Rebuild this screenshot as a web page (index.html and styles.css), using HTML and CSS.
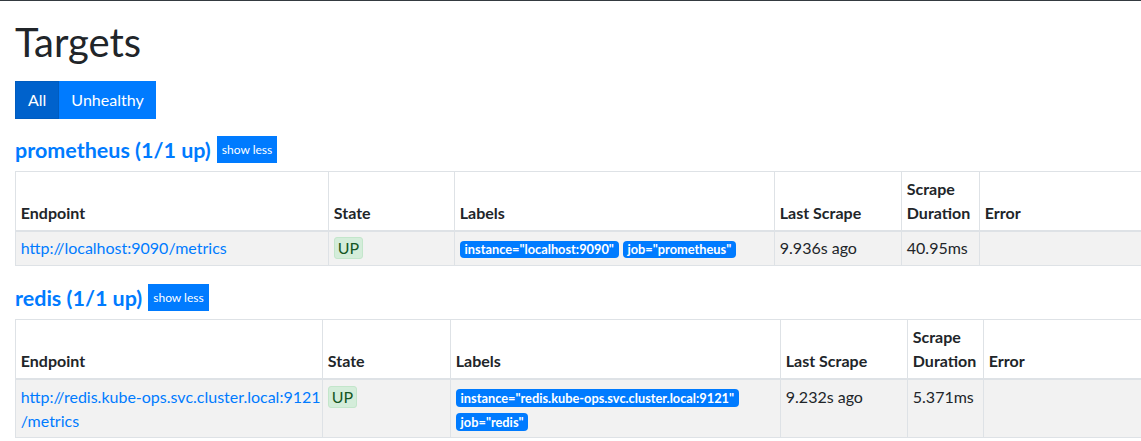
FILE: index.html
```html
<!DOCTYPE html>
<html lang="en">
<head>
<meta charset="utf-8">
<title>Targets</title>
<link rel="stylesheet" href="styles.css">
</head>
<body>
<div class="topbar"></div>
<main class="page">
  <h1 class="title">Targets</h1>
  <div class="filters">
    <button class="btn active">All</button><button class="btn">Unhealthy</button>
  </div>

  <section class="pool">
    <div class="pool-head">
      <a class="pool-name" href="#prometheus">prometheus (1/1 up)</a>
      <button class="toggle">show less</button>
    </div>
    <table class="targets t-prom">
      <colgroup>
        <col class="c-endpoint"><col class="c-state"><col class="c-labels"><col class="c-last"><col class="c-dur"><col class="c-err">
      </colgroup>
      <thead>
        <tr><th>Endpoint</th><th>State</th><th>Labels</th><th>Last Scrape</th><th>Scrape Duration</th><th>Error</th></tr>
      </thead>
      <tbody>
        <tr>
          <td><a class="endpoint" href="#">http://localhost:9090/metrics</a></td>
          <td><span class="state-up">UP</span></td>
          <td><span class="label">instance="localhost:9090"</span><span class="label">job="prometheus"</span></td>
          <td>9.936s ago</td>
          <td>40.95ms</td>
          <td></td>
        </tr>
      </tbody>
    </table>
  </section>

  <section class="pool">
    <div class="pool-head">
      <a class="pool-name" href="#redis">redis (1/1 up)</a>
      <button class="toggle">show less</button>
    </div>
    <table class="targets t-redis">
      <colgroup>
        <col class="c-endpoint"><col class="c-state"><col class="c-labels"><col class="c-last"><col class="c-dur"><col class="c-err">
      </colgroup>
      <thead>
        <tr><th>Endpoint</th><th>State</th><th>Labels</th><th>Last Scrape</th><th>Scrape Duration</th><th>Error</th></tr>
      </thead>
      <tbody>
        <tr>
          <td><a class="endpoint" href="#"><span class="nobr">http://redis.kube-ops.svc.cluster.local:9121</span><wbr><span class="nobr">/metrics</span></a></td>
          <td><span class="state-up">UP</span></td>
          <td><span class="label">instance="redis.kube-ops.svc.cluster.local:9121"</span> <span class="label">job="redis"</span></td>
          <td>9.232s ago</td>
          <td>5.371ms</td>
          <td></td>
        </tr>
      </tbody>
    </table>
  </section>
</main>
</body>
</html>
```
FILE: styles.css
```css
html, body {
  margin: 0;
  padding: 0;
}

body {
  font-family: Lato, "Noto Sans", sans-serif;
  font-size: 16px;
  line-height: 1.5;
  color: #212529;
  background: #fff;
  overflow: hidden;
}

.topbar {
  height: 1px;
  background: #343a40;
}

.page {
  padding: 0 15px;
}

.title {
  font-size: 40px;
  font-weight: 400;
  line-height: 1.2;
  margin: 17px 0 15px;
}

.filters {
  display: flex;
  margin-bottom: 17px;
}

.btn {
  font: inherit;
  line-height: 24px;
  color: #fff;
  background: #007bff;
  border: 1px solid #007bff;
  padding: 6px 12px;
  border-radius: 0;
  cursor: pointer;
}

.btn + .btn {
  padding: 6px 11px;
}

.btn.active {
  background: #0062cc;
  border-color: #005cbf;
}

.pool-head {
  display: flex;
  align-items: center;
  gap: 6px;
  height: 27px;
  margin-bottom: 8px;
}

.pool-name {
  font-size: 21.5px;
  font-weight: 700;
  line-height: 26px;
  color: #007bff;
  text-decoration: none;
}

.toggle {
  font-family: inherit;
  font-size: 12px;
  line-height: 19px;
  padding: 4px 5px;
  color: #fff;
  background: #007bff;
  border: 0;
  border-radius: 0;
}

.targets {
  border-collapse: collapse;
  table-layout: fixed;
  width: 1200px;
  margin-bottom: 18px;
}

.targets th,
.targets td {
  border: 1px solid #dee2e6;
  padding: 4.8px;
  text-align: left;
  vertical-align: top;
}

.targets th {
  vertical-align: bottom;
  font-weight: 700;
}

.targets thead th {
  border-bottom: 2px solid #dee2e6;
}

.targets tbody tr:nth-child(odd) {
  background: rgba(0, 0, 0, 0.05);
}

.t-prom .c-endpoint { width: 313px; }
.t-prom .c-state { width: 126px; }
.t-prom .c-labels { width: 320px; }
.t-prom .c-last { width: 127px; }
.t-prom .c-dur { width: 78px; }

.t-redis .c-endpoint { width: 307px; }
.t-redis .c-state { width: 128px; }
.t-redis .c-labels { width: 330px; }
.t-redis .c-last { width: 127px; }
.t-redis .c-dur { width: 76px; }

.endpoint {
  color: #007bff;
  text-decoration: none;
}

.nobr {
  white-space: nowrap;
}

.state-up {
  display: inline-block;
  font-size: 16px;
  line-height: 18px;
  padding: 1px 3px;
  color: #155724;
  background: #d4edda;
  border: 1px solid #c3e6cb;
  border-radius: 3px;
}

.label {
  display: inline-block;
  font-size: 12.8px;
  font-weight: 700;
  line-height: 1;
  padding: 2.2px 4.8px;
  border-radius: 4px;
  background: #007bff;
  color: #fff;
  margin-right: 4px;
  white-space: nowrap;
}
```
